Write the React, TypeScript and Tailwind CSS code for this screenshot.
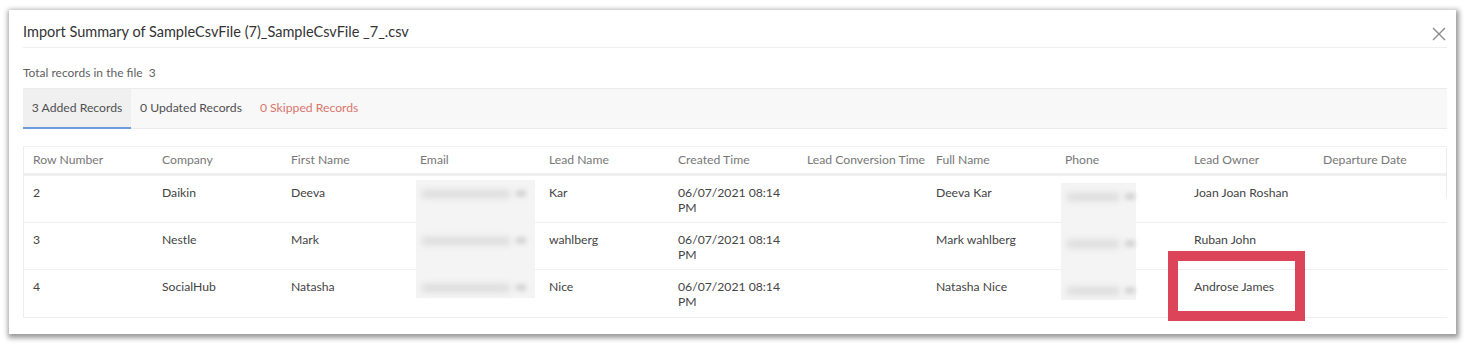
import React from "react";

const COLUMNS = [
  "Row Number",
  "Company",
  "First Name",
  "Email",
  "Lead Name",
  "Created Time",
  "Lead Conversion Time",
  "Full Name",
  "Phone",
  "Lead Owner",
  "Departure Date",
];

const ROWS = [
  ["2", "Daikin", "Deeva", "", "Kar", "06/07/2021 08:14 PM", "", "Deeva Kar", "", "Joan Joan Roshan", ""],
  ["3", "Nestle", "Mark", "", "wahlberg", "06/07/2021 08:14 PM", "", "Mark wahlberg", "", "Ruban John", ""],
  ["4", "SocialHub", "Natasha", "", "Nice", "06/07/2021 08:14 PM", "", "Natasha Nice", "", "Androse James", ""],
];

const Cell = ({ children, last }: { children?: React.ReactNode; last?: boolean }) => (
  <div className={last ? "flex-1 px-[9px] whitespace-nowrap" : "w-[129px] shrink-0 pl-[9px] whitespace-nowrap"}>
    {children}
  </div>
);

// blurred-out block that hides emails / phones
const Redacted = ({ className, lines }: { className: string; lines: string }) => (
  <div className={`absolute bg-[#f4f4f4] ${className}`}>
    {[0, 1, 2].map((i) => (
      <div key={i} className="h-[47px] pt-[10px] flex gap-[6px] items-start">
        <div className={`h-[8px] bg-[#dcdcdc] blur-[3px] ${lines}`} />
        <div className="h-[7px] w-[10px] bg-[#d6d6d6] blur-[2px]" />
      </div>
    ))}
  </div>
);

const App = () => {
  return (
    <div className="w-[1465px] h-[345px] bg-white pt-[10px] pl-[9px] font-['Lato','Open_Sans',sans-serif]">
      <div className="relative w-[1447px] h-[324px] bg-white pl-[14px] pr-[9px] shadow-[1px_2px_5px_2px_rgba(0,0,0,0.4)]">
        <div className="flex justify-between items-start pt-[13px] pb-[6px] border-b border-[#efefef]">
          <p className="text-[14.5px] leading-[18px] text-[#333]">
            Import Summary of SampleCsvFile (7)_SampleCsvFile _7_.csv
          </p>
          <svg width="14" height="14" viewBox="0 0 14 14" className="mt-[4px] mr-[1px]">
            <path d="M1 1L13 13M13 1L1 13" stroke="#8a8a8a" strokeWidth="1.4" />
          </svg>
        </div>

        <p className="pt-[17px] mb-[7px] text-[12px] leading-[16px] text-[#5f5f5f]">
          Total records in the file&nbsp; 3
        </p>

        <div className="flex h-[41px] bg-[#f8f8f8] border-t border-b border-[#ebebeb] text-[12.2px]">
          <div className="w-[108px] flex items-center justify-center bg-[#f0f0f0] border-b-2 border-[#6d9be0] mb-[-1px] text-[#505050]">
            3 Added Records
          </div>
          <div className="px-[9px] flex items-center text-[#505050]">0 Updated Records</div>
          <div className="px-[9px] flex items-center text-[#d9756c]">0 Skipped Records</div>
        </div>

        <div className="relative mt-[17px] border-l border-b border-[#eeeeee] text-[12.2px]">
          <div className="flex h-[30px] items-center border-t border-b-[3px] border-[#efefef] text-[#777]">
            {COLUMNS.map((c, i) => (
              <Cell key={c} last={i === COLUMNS.length - 1}>
                {c}
              </Cell>
            ))}
          </div>
          {ROWS.map((row, r) => (
            <div
              key={r}
              className={`flex h-[47px] pt-[9px] leading-[15px] text-[#444] ${r < ROWS.length - 1 ? "border-b border-[#efefef]" : ""}`}
            >
              {row.map((v, i) => (
                <Cell key={i} last={i === row.length - 1}>
                  {i === 5 ? <span className="block w-[104px] whitespace-normal">{v}</span> : v}
                </Cell>
              ))}
            </div>
          ))}
          <div className="absolute right-0 top-[2px] h-[50px] w-px bg-[#ececec]" />

          <Redacted className="left-[392px] top-[34px] w-[119px] h-[118px] pl-[6px]" lines="w-[88px]" />
          <Redacted className="left-[1037px] top-[37px] w-[75px] h-[117px] pl-[6px]" lines="w-[52px]" />
        </div>

        <div className="absolute left-[1159px] top-[241px] w-[137px] h-[70px] border-[10px] border-[#dc4459]" />
      </div>
    </div>
  );
};

export default App;
